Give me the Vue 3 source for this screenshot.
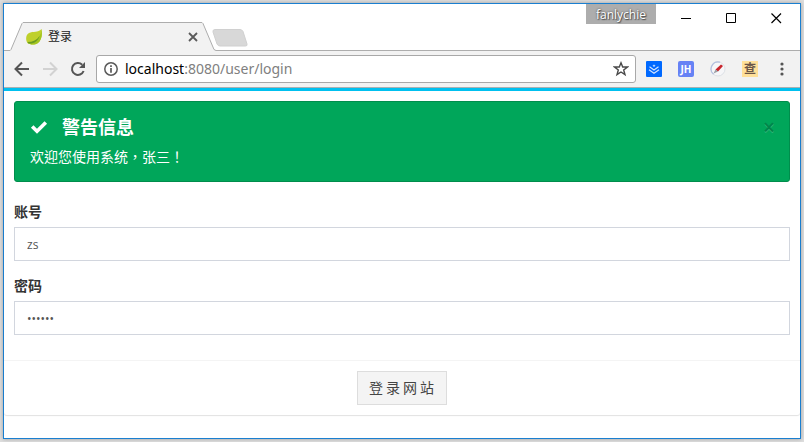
<script setup>
import { ref } from 'vue'

const account = ref('zs')
const password = ref('123456')
const showAlert = ref(true)
</script>

<template>
  <div class="desktop">
    <div class="window">
      <header class="titlebar">
        <div class="tab">
          <svg class="tab-shape" width="206" height="29" viewBox="0 0 206 29" aria-hidden="true">
            <path d="M0 29V28.500L1 27.500L12 1.500L13 .5H192L193 1.500L204 27.500L206 28.500V29Z" fill="#f2f2f2" />
            <path d="M0 28.500L1 27.500L12 1.500L13 .5H192L193 1.500L204 27.500L206 28.500" fill="none" stroke="#adadad" stroke-linejoin="round" />
          </svg>
          <svg class="favicon" width="16" height="16" viewBox="0 0 16 16" aria-hidden="true">
            <path d="M15.500 0C16.500 6 15.500 11 12 14C8 16.500 4 15.500 1.500 14C-.5 11-.5 6 3 4C7 2 12 4 15.500 0Z" fill="#bfd02b" />
            <path d="M15.500 0C16.500 6 15.500 11 12 14C8 16.500 4 15.500 1.500 14C7 13.500 12 11 15 4Z" fill="#a3c520" />
            <path d="M1.500 13C7 13 11 11 13.500 7C12 12 8 15 2.500 14.500Z" fill="#6a9c22" />
          </svg>
          <span class="tab-title">登录</span>
          <button class="tab-close" type="button" aria-label="关闭标签页">
            <svg width="10" height="10" viewBox="0 0 10 10"><path d="M1 1L9 9M9 1L1 9" stroke="#5a5a5a" stroke-width="1.800" /></svg>
          </button>
        </div>
        <button class="new-tab" type="button" aria-label="新标签页">
          <svg width="36" height="18" viewBox="0 0 36 18"><path d="M3 .5H28Q30 .5 31 2.500L35 15Q35.500 17 33.500 17H8Q6 17 5 15L1 3Q.5 .5 3 .5Z" fill="#d8d8d8" stroke="#d0d0d0" /></svg>
        </button>
        <div class="window-side">
          <span class="profile">fanlychie</span>
          <button class="control" type="button" aria-label="最小化">
            <svg width="11" height="11" viewBox="0 0 11 11"><path d="M0 5.500H10" stroke="#000" /></svg>
          </button>
          <button class="control" type="button" aria-label="最大化">
            <svg width="11" height="11" viewBox="0 0 11 11"><path d="M.5 .5H9.500V9.500H.5Z" fill="none" stroke="#000" /></svg>
          </button>
          <button class="control" type="button" aria-label="关闭">
            <svg width="11" height="11" viewBox="0 0 11 11"><path d="M.5 .5L10 10M10 .5L.5 10" stroke="#000" stroke-width="1.200" /></svg>
          </button>
        </div>
      </header>

      <nav class="toolbar">
        <button class="nav" type="button" aria-label="后退">
          <svg width="16" height="16" viewBox="0 0 16 16"><path d="M15 8H2M8 1.500L1.500 8L8 14.500" fill="none" stroke="#555" stroke-width="2" /></svg>
        </button>
        <button class="nav" type="button" aria-label="前进" disabled>
          <svg width="16" height="16" viewBox="0 0 16 16"><path d="M1 8H14M8 1.500L14.500 8L8 14.500" fill="none" stroke="#d2d2d2" stroke-width="2" /></svg>
        </button>
        <button class="nav" type="button" aria-label="刷新">
          <svg width="16" height="16" viewBox="0 0 16 16"><path d="M13.600 10A6 6 0 1 1 12.200 3.700" fill="none" stroke="#555" stroke-width="2" /><path d="M15 1V7H9Z" fill="#555" /></svg>
        </button>
        <div class="omnibox">
          <svg width="14" height="14" viewBox="0 0 14 14" aria-hidden="true"><circle cx="7" cy="7" r="6.200" fill="none" stroke="#5a5a5a" stroke-width="1.500" /><path d="M7 3.200V5M7 6V10.800" stroke="#5a5a5a" stroke-width="1.700" /></svg>
          <span class="url"><b>localhost</b>:8080/user/login</span>
          <button class="star" type="button" aria-label="收藏">
            <svg width="16" height="16" viewBox="0 0 16 16"><path d="M8 1.800L9.700 6H14.400L10.700 8.900L12 13.700L8 11L4 13.700L5.300 8.900L1.600 6H6.300Z" fill="none" stroke="#4a4a4a" stroke-width="1.400" /></svg>
          </button>
        </div>
        <div class="extensions">
          <svg width="16" height="16" viewBox="0 0 16 16" aria-hidden="true">
            <rect width="16" height="16" rx="1" fill="#0069ff" />
            <path d="M8 3.500L9.500 4.800L8 6L6.500 4.800Z" fill="#b9d7ff" />
            <path d="M3.500 5.800L8 9L12.500 5.800M3 8.800L8 12.300L13 8.800" fill="none" stroke="#d5e6ff" stroke-width="1.100" />
          </svg>
          <span class="ext-jh">JH</span>
          <svg width="16" height="16" viewBox="0 0 16 16" aria-hidden="true">
            <circle cx="8" cy="8" r="7" fill="#f6f6f8" stroke="#dde1e6" />
            <path d="M10 1.200A7 7 0 0 0 3.500 13.200" fill="none" stroke="#b3c0df" stroke-width="1.200" />
            <path d="M5.500 8.500L11 3.500L13 5L8 10.500Z" fill="#c8242c" />
            <path d="M3.500 12.500L5.500 8.500L8 10.500Z" fill="#9a9fa5" />
          </svg>
          <span class="ext-cha">查</span>
        </div>
        <button class="menu" type="button" aria-label="菜单">
          <svg width="4" height="14" viewBox="0 0 4 14"><circle cx="2" cy="2" r="1.600" fill="#555" /><circle cx="2" cy="7" r="1.600" fill="#555" /><circle cx="2" cy="12" r="1.600" fill="#555" /></svg>
        </button>
      </nav>

      <main class="page">
        <form @submit.prevent>
          <div class="fields">
            <div v-if="showAlert" class="alert" role="alert">
              <div class="alert-head">
                <svg width="18" height="18" viewBox="0 0 18 18" aria-hidden="true"><path d="M2.200 8.500L7 13.200L15.800 4.400" fill="none" stroke="#fff" stroke-width="3.600" /></svg>
                <h4>警告信息</h4>
                <button class="dismiss" type="button" aria-label="关闭提示" @click="showAlert = false">×</button>
              </div>
              <p>欢迎您使用系统，张三！</p>
            </div>
            <div class="group">
              <label for="account">账号</label>
              <input id="account" v-model="account" type="text" />
            </div>
            <div class="group">
              <label for="password">密码</label>
              <input id="password" v-model="password" type="password" />
            </div>
          </div>
          <footer class="actions">
            <button class="submit" type="submit">登录网站</button>
          </footer>
        </form>
      </main>
    </div>
  </div>
</template>

<style>
body {
  background: #dedede;
}
</style>

<style scoped>
* {
  box-sizing: border-box;
}

.desktop {
  min-height: 100vh;
  display: flex;
  padding: 3px;
  font-family: "Open Sans", "Noto Sans CJK SC", sans-serif;
}

.window {
  flex: 1;
  min-width: 0;
  display: flex;
  flex-direction: column;
  border: 1px solid #1a7fd0;
  background: #fff;
  box-shadow: 0 0 4px rgba(0, 0, 0, 0.3);
}

button {
  margin: 0;
  padding: 0;
  border: 0;
  background: none;
  font-family: inherit;
}

svg {
  display: block;
  flex: none;
}

.titlebar {
  height: 47px;
  display: flex;
  align-items: flex-end;
  padding: 0 1px 0 6px;
  box-shadow: inset 0 -1px #adadad;
}

.tab {
  position: relative;
  width: 206px;
  height: 29px;
  display: flex;
  align-items: center;
  gap: 6px;
  padding: 0 18px 0 16px;
}

.tab-shape {
  position: absolute;
  inset: 0;
}

.favicon,
.tab-title,
.tab-close {
  position: relative;
}

.tab-title {
  flex: 1;
  font-size: 12px;
  line-height: 16px;
  color: #222;
}

.new-tab {
  padding-bottom: 4px;
  margin-left: -4px;
}

.window-side {
  align-self: flex-start;
  margin-left: auto;
  display: flex;
}

.profile {
  height: 20px;
  padding: 0 10px;
  margin-right: 8px;
  background: #adadad;
  color: #fff;
  font-size: 12px;
  line-height: 21px;
  text-shadow: 0 0 2px #444, 1px 1px 1px #555;
}

.control {
  width: 45px;
  height: 29px;
  display: grid;
  place-items: center;
}

.toolbar {
  height: 37px;
  display: flex;
  align-items: center;
  padding: 0 10px;
  gap: 12px;
  background: #f2f2f2;
  border-bottom: 1px solid #a9b0b2;
}

.nav {
  width: 16px;
}

.omnibox {
  flex: 1;
  height: 28px;
  display: flex;
  align-items: center;
  gap: 7px;
  padding: 0 6px 0 7px;
  margin-left: -2px;
  border: 1px solid #a8a8a8;
  border-radius: 3px;
  background: #fff;
}

.url {
  flex: 1;
  font-family: "Noto Sans", "Open Sans", sans-serif;
  font-size: 14px;
  line-height: 20px;
  color: #808080;
}

.url b {
  font-weight: 400;
  color: #000;
}

.extensions {
  display: flex;
  gap: 16px;
  margin-left: -2px;
}

.ext-jh,
.ext-cha {
  width: 16px;
  height: 16px;
  text-align: center;
  line-height: 16px;
}

.ext-jh {
  border-radius: 2px;
  background: #6682f5;
  color: #fff;
  font-size: 10px;
  font-weight: 700;
}

.ext-cha {
  background: #ffe099;
  color: #6b5548;
  font-size: 12px;
  font-weight: 700;
}

.menu {
  width: 4px;
  margin: 0 6px 0 10px;
}

.page {
  flex: 1;
  border-top: 3px solid #00c0ef;
  color: #333;
  font-size: 14px;
  line-height: 20px;
}

form {
  border-radius: 0 0 3px 3px;
  box-shadow: 0 1px 1px rgba(0, 0, 0, 0.12);
}

.fields {
  padding: 10px;
}

.alert {
  padding: 15px;
  margin-bottom: 20px;
  border: 1px solid #008d4c;
  border-radius: 3px;
  background: #00a65a;
  color: #fff;
}

.alert-head {
  display: flex;
  align-items: center;
  gap: 14px;
  height: 20px;
  margin-bottom: 9px;
}

.alert h4 {
  flex: 1;
  margin: 0;
  font-size: 18px;
  line-height: 20px;
  font-weight: 700;
}

.alert p {
  margin: 0;
  font-family: "Noto Sans CJK TC", sans-serif;
  line-height: 20px;
}

.dismiss {
  width: 10px;
  display: flex;
  justify-content: center;
  color: #00854a;
  font-size: 21px;
  font-weight: 600;
  line-height: 20px;
  text-shadow: 0 1px 0 #33b87b;
}

.group {
  display: flex;
  flex-direction: column;
  gap: 5px;
  margin-bottom: 15px;
}

label {
  font-weight: 700;
}

input {
  width: 100%;
  height: 34px;
  padding: 6px 12px;
  border: 1px solid #d2d6de;
  border-radius: 0;
  background: #fff;
  color: #555;
  font-family: inherit;
  font-size: 12px;
  outline: 0;
}

.actions {
  display: flex;
  justify-content: center;
  padding: 10px;
  border-top: 1px solid #f4f4f4;
}

.submit {
  height: 34px;
  padding: 0 9px 0 11px;
  border: 1px solid #ddd;
  background: #f4f4f4;
  color: #444;
  font-size: 14px;
  line-height: 20px;
  letter-spacing: 3px;
}
</style>
